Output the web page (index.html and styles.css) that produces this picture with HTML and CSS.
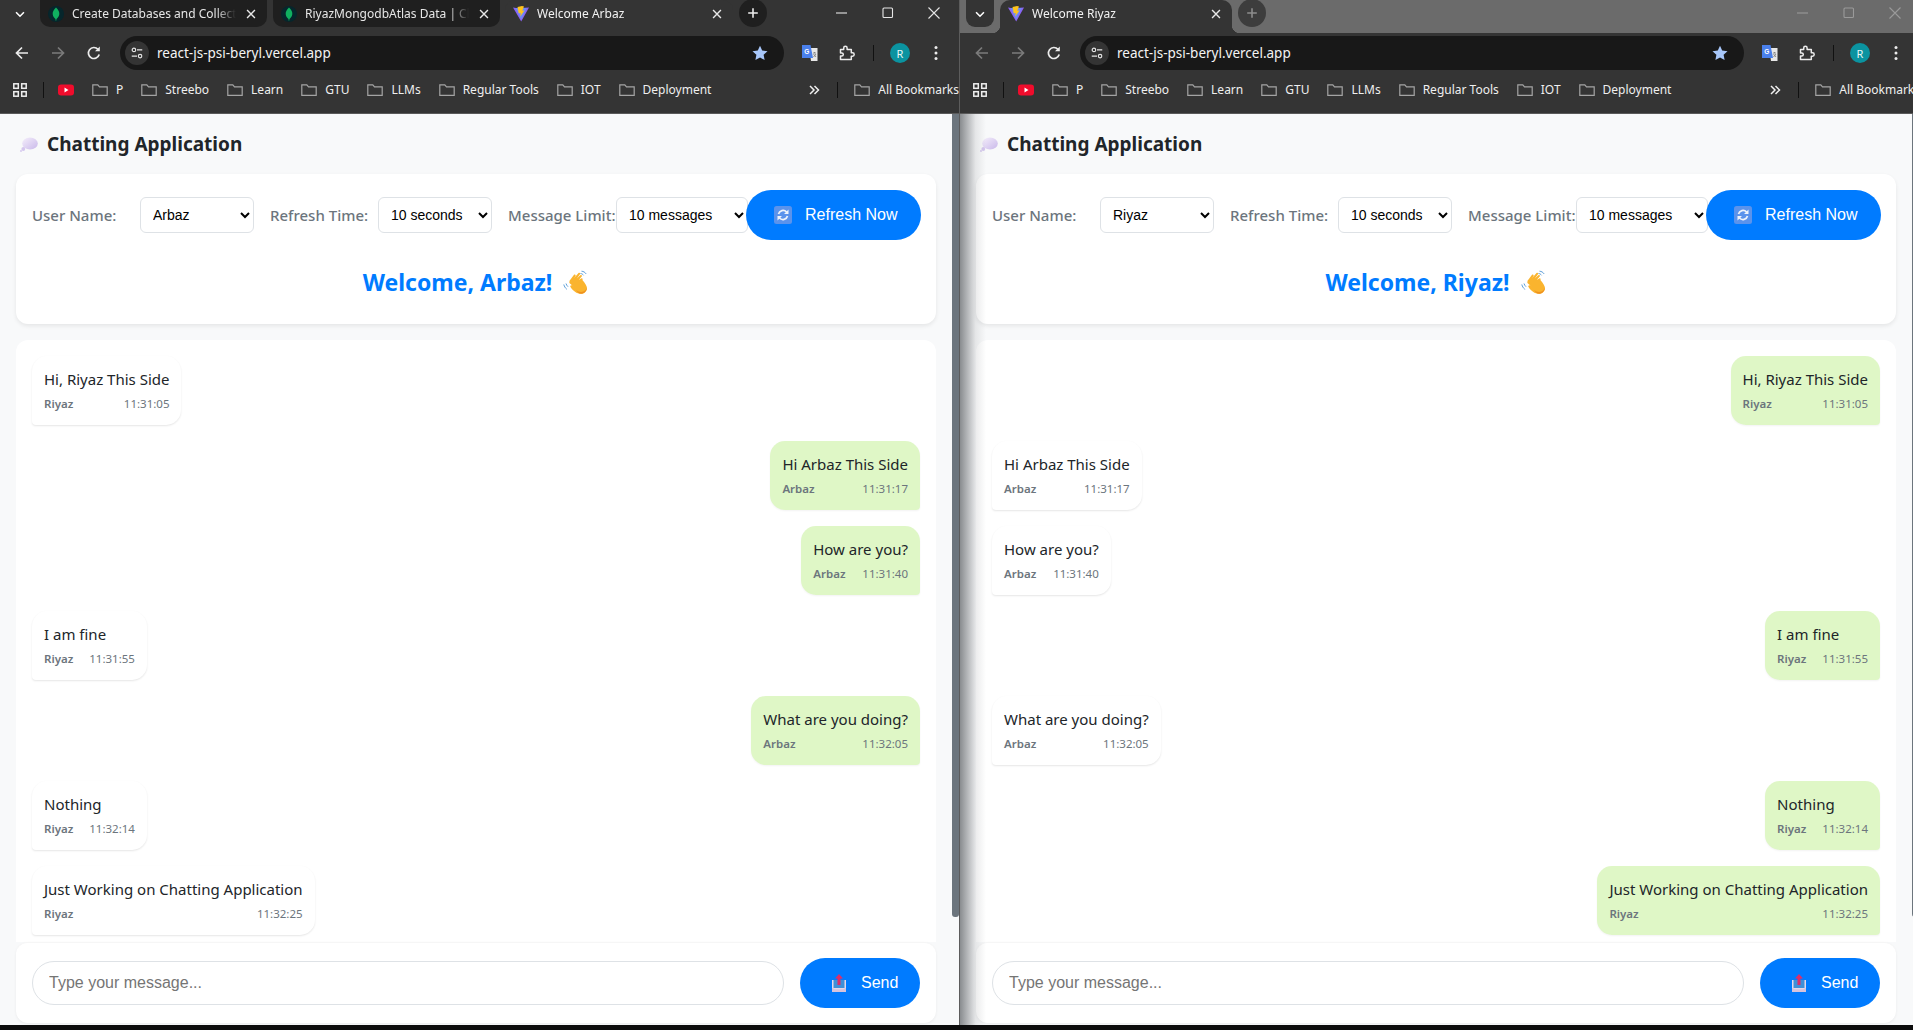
FILE: index.html
```html
<!DOCTYPE html>
<html lang="en">
<head>
  <meta charset="UTF-8" />
  <title>Chatting Application</title>
  <link rel="stylesheet" href="styles.css">
</head>
<body>
  <svg class="sprites" width="0" height="0">
    <symbol id="i-chevron" viewBox="0 0 16 16"><path d="M3.5 6l4.5 4.5L12.500 6" fill="none" stroke="currentColor" stroke-width="1.800"/></symbol>
    <symbol id="i-close" viewBox="0 0 16 16"><path d="M3.500 3.500l9 9M12.500 3.500l-9 9" fill="none" stroke="currentColor" stroke-width="1.600"/></symbol>
    <symbol id="i-plus" viewBox="0 0 16 16"><path d="M8 2.500v11M2.500 8h11" fill="none" stroke="currentColor" stroke-width="1.800"/></symbol>
    <symbol id="i-min" viewBox="0 0 16 16"><path d="M2 8h11" fill="none" stroke="currentColor" stroke-width="1.100"/></symbol>
    <symbol id="i-max" viewBox="0 0 16 16"><rect x="3" y="3" width="9.500" height="9.500" rx="1" fill="none" stroke="currentColor" stroke-width="1.100"/></symbol>
    <symbol id="i-x" viewBox="0 0 16 16"><path d="M2.500 2.500l11 11M13.500 2.500l-11 11" fill="none" stroke="currentColor" stroke-width="1.100"/></symbol>
    <symbol id="i-back" viewBox="0 0 16 16"><path d="M14 8H3M8 2.500L2.500 8 8 13.500" fill="none" stroke="currentColor" stroke-width="1.700"/></symbol>
    <symbol id="i-forward" viewBox="0 0 16 16"><path d="M2 8h11M8 2.500L13.500 8 8 13.500" fill="none" stroke="currentColor" stroke-width="1.700"/></symbol>
    <symbol id="i-reload" viewBox="0 0 16 16"><path d="M13.200 9.500A5.500 5.500 0 1 1 12 4.300" fill="none" stroke="currentColor" stroke-width="1.700"/><path d="M13.800 1.500v4.800H9z" fill="currentColor"/></symbol>
    <symbol id="i-tune" viewBox="0 0 16 16"><g fill="none" stroke="currentColor" stroke-width="1.300"><circle cx="4.500" cy="4.500" r="2"/><path d="M8 4.500h6M2 11.500h6"/><circle cx="11.500" cy="11.500" r="2"/></g></symbol>
    <symbol id="i-star" viewBox="0 0 16 16"><path d="M8 .8l2.200 4.800 5.300.6-3.900 3.600 1 5.200L8 12.400 3.400 15l1-5.200L.5 6.200l5.300-.6z" fill="#a8c7fa"/></symbol>
    <symbol id="i-translate" viewBox="0 0 16 16"><path d="M7 3h8.500v13H9z" fill="#e8e8e8"/><path d="M11 8h3M12.500 7v1M11.500 12l2.500-3M11.500 9l2.500 3" stroke="#777" stroke-width=".8" fill="none"/><path d="M0 0h8.500l2.500 13H0z" fill="#4a80ec"/><text x="4.800" y="8.600" font-size="6.500" font-weight="700" font-family="Liberation Sans, sans-serif" text-anchor="middle" fill="#fff">G</text></symbol>
    <symbol id="i-puzzle" viewBox="0 0 16 16"><path d="M1.500 4.500h3.200V3a1.700 1.700 0 0 1 3.400 0v1.500h4.200v3.300h1.200a1.700 1.700 0 0 1 0 3.400h-1.200v3.300H1.500V11h1.300a1.500 1.500 0 0 0 0-3H1.500z" fill="none" stroke="currentColor" stroke-width="1.500" stroke-linejoin="round"/></symbol>
    <symbol id="i-kebab" viewBox="0 0 16 16"><circle cx="8" cy="2.500" r="1.500" fill="currentColor"/><circle cx="8" cy="8" r="1.500" fill="currentColor"/><circle cx="8" cy="13.500" r="1.500" fill="currentColor"/></symbol>
    <symbol id="i-apps" viewBox="0 0 14 14"><g fill="none" stroke="currentColor" stroke-width="1.500"><rect x=".8" y=".8" width="4.500" height="4.500"/><rect x="8.700" y=".8" width="4.500" height="4.500"/><rect x=".8" y="8.700" width="4.500" height="4.500"/><rect x="8.700" y="8.700" width="4.500" height="4.500"/></g></symbol>
    <symbol id="i-youtube" viewBox="0 0 16 12"><rect width="16" height="11" y=".5" rx="3" fill="#f00c2c"/><path d="M6.500 3.500l4 2.500-4 2.500z" fill="#fff"/></symbol>
    <symbol id="i-folder" viewBox="0 0 16 14"><path d="M.8 12.300V1.800h5l1.700 2h7.700v8.500z" fill="none" stroke="#a4a4a4" stroke-width="1.200"/></symbol>
    <symbol id="i-more" viewBox="0 0 12 12"><path d="M2 2l4 4-4 4M6.500 2l4 4-4 4" fill="none" stroke="currentColor" stroke-width="1.500"/></symbol>
    <symbol id="i-mongo" viewBox="0 0 16 16"><circle cx="8" cy="8" r="8" fill="#06262c"/><path d="M8 1.500c2.600 2.500 3.500 4.500 3.300 6.800C11 10.800 9.300 12 8.500 13l-.3 1.800h-.5L7.500 13c-.9-1-2.600-2.200-2.800-4.700C4.500 6 5.500 4 8 1.500z" fill="#10b060"/></symbol>
    <symbol id="i-vite" viewBox="0 0 16 16"><path d="M0 1.500L6 2.500 8 2 16 1.500 8.200 15.500z" fill="#8a63f5"/><path d="M2.500 2l5.700 11.500L13.800 2z" fill="#5aa8f5" opacity=".6"/><path d="M9 0L4.500 1l1.200 6.300 2-.3-.5 3.500L11.500 4.500l-2.200.2L11 .5z" fill="#fdc31d"/></symbol>
    <symbol id="i-thought" viewBox="0 0 18 15"><defs><linearGradient id="g-thought" x1="0" y1="0" x2="1" y2="1"><stop offset="0" stop-color="#f5effb"/><stop offset="1" stop-color="#c9b8ea"/></linearGradient></defs><ellipse cx="10" cy="6.500" rx="7.800" ry="6" fill="url(#g-thought)"/><circle cx="3.300" cy="12" r="1.900" fill="#d4c6ee"/><circle cx="1" cy="14" r=".9" fill="#d4c6ee"/></symbol>
    <symbol id="i-refresh" viewBox="0 0 18 18"><rect width="18" height="18" rx="2.500" fill="#5b93ec"/><path d="M4.500 8a4.700 4.700 0 0 1 8-2l1 1M13.500 10a4.700 4.700 0 0 1-8 2l-1-1" fill="none" stroke="#eef3fb" stroke-width="1.700"/><path d="M14.500 3.500v4.500H10zM3.500 14.500V10H8z" fill="#eef3fb"/></symbol>
    <symbol id="i-wave" viewBox="0 0 26 24"><g fill="none" stroke="#5c9ed8" stroke-width="1"><path d="M.8 14.500c.5 2 1.500 3.500 3 4.800"/><path d="M3 13.500c.4 1.300 1 2.300 2 3.200"/><path d="M18.500 1.200c2 .2 3.500 1 4.600 2.700"/><path d="M17.500 3.500c1.300.1 2.300.7 3 1.800"/></g><path d="M6 11.500L11 4.800c.9-1 2.200.1 1.500 1.200l-1.300 2 4.300-5c1-1 2.400.2 1.500 1.300l-3.200 4.200 3.500-3.300c1-.9 2.300.4 1.400 1.400l-3 3.500 2.500-1.700c1-.7 2 .5 1.200 1.500C22 13 24 16 24 18c0 3.500-3 5.800-6 5.800-4.500 0-8-3-10.500-6.800-.8-1.300.6-2.500 1.700-1.500l1.500 1.300-4-3.500c-.9-.9 0-2 .8-1.800z" fill="#fab42e"/><path d="M13 20c2 1.800 5 2.500 7.500 1.500 1.800-.8 3-2.200 3.300-4 .3 3.500-2.800 6.300-5.800 6.300-2 0-3.500-1.500-5-3.800z" fill="#ef9220"/></symbol>
    <symbol id="i-outbox" viewBox="0 0 16 18"><path d="M1 6h14v12H1z" fill="#e6d8ea"/><path d="M2.500 6h11v8h-11z" fill="#3f90d8"/><path d="M1 14l3 1.200h8L15 14v4H1z" fill="#d6c3dc"/><path d="M8 0l4 4.500H9.500V11h-3V4.500H4z" fill="#dd2e6a"/></symbol>
  </svg>

  <div class="desktop">
    <section class="window window-active">
      <div class="tabstrip">
        <span class="strip-btn"><svg class="ic12"><use href="#i-chevron"/></svg></span>
        <div class="tab tab-bg">
          <svg class="favicon"><use href="#i-mongo"/></svg>
          <span class="tab-title">Create Databases and Collections</span>
          <svg class="tab-x"><use href="#i-close"/></svg>
        </div>
        <div class="tab tab-bg">
          <svg class="favicon"><use href="#i-mongo"/></svg>
          <span class="tab-title">RiyazMongodbAtlas Data | Cloud</span>
          <svg class="tab-x"><use href="#i-close"/></svg>
        </div>
        <div class="tab tab-current">
          <svg class="favicon"><use href="#i-vite"/></svg>
          <span class="tab-title">Welcome Arbaz</span>
          <svg class="tab-x"><use href="#i-close"/></svg>
        </div>
        <span class="new-tab"><svg class="ic12"><use href="#i-plus"/></svg></span>
        <div class="win-controls">
          <svg class="ic16"><use href="#i-min"/></svg>
          <svg class="ic16"><use href="#i-max"/></svg>
          <svg class="ic16"><use href="#i-x"/></svg>
        </div>
      </div>
      <div class="toolbar">
        <span class="tool"><svg class="ic16"><use href="#i-back"/></svg></span>
        <span class="tool tool-off"><svg class="ic16"><use href="#i-forward"/></svg></span>
        <span class="tool"><svg class="ic16"><use href="#i-reload"/></svg></span>
        <div class="omnibox">
          <span class="site-btn"><svg class="ic14"><use href="#i-tune"/></svg></span>
          <span class="url">react-js-psi-beryl.vercel.app</span>
          <svg class="ic16 star"><use href="#i-star"/></svg>
        </div>
        <span class="tool tool-first"><svg class="ic16"><use href="#i-translate"/></svg></span>
        <span class="tool"><svg class="ic16"><use href="#i-puzzle"/></svg></span>
        <span class="tool-sep"></span>
        <span class="tool"><span class="avatar">R</span></span>
        <span class="tool"><svg class="ic16"><use href="#i-kebab"/></svg></span>
      </div>
      <div class="bookmarks">
        <svg class="ic14"><use href="#i-apps"/></svg>
        <span class="bm-sep"></span>
        <svg class="yt"><use href="#i-youtube"/></svg>
        <span class="bm"><svg class="folder"><use href="#i-folder"/></svg>P</span>
        <span class="bm"><svg class="folder"><use href="#i-folder"/></svg>Streebo</span>
        <span class="bm"><svg class="folder"><use href="#i-folder"/></svg>Learn</span>
        <span class="bm"><svg class="folder"><use href="#i-folder"/></svg>GTU</span>
        <span class="bm"><svg class="folder"><use href="#i-folder"/></svg>LLMs</span>
        <span class="bm"><svg class="folder"><use href="#i-folder"/></svg>Regular Tools</span>
        <span class="bm"><svg class="folder"><use href="#i-folder"/></svg>IOT</span>
        <span class="bm"><svg class="folder"><use href="#i-folder"/></svg>Deployment</span>
        <svg class="more"><use href="#i-more"/></svg>
        <span class="bm-sep"></span>
        <span class="bm bm-all"><svg class="folder"><use href="#i-folder"/></svg>All Bookmarks</span>
      </div>
      <div class="viewport">
        <main class="app">
          <h1 class="app-title"><svg class="thought"><use href="#i-thought"/></svg>Chatting Application</h1>
          <div class="card settings">
            <div class="settings-row">
              <label class="field-label">User Name:</label>
              <select class="field-select"><option>Arbaz</option><option>Riyaz</option></select>
              <label class="field-label">Refresh Time:</label>
              <select class="field-select"><option>10 seconds</option></select>
              <label class="field-label">Message Limit:</label>
              <select class="field-select field-wide"><option>10 messages</option></select>
              <button class="btn btn-refresh"><svg class="btn-icon"><use href="#i-refresh"/></svg>Refresh Now</button>
            </div>
            <h2 class="welcome">Welcome, Arbaz!<svg class="wave"><use href="#i-wave"/></svg></h2>
          </div>
          <div class="card messages">
            <div class="msg msg-in"><p>Hi, Riyaz This Side</p><div class="meta"><b>Riyaz</b><span>11:31:05</span></div></div>
            <div class="msg msg-out"><p>Hi Arbaz This Side</p><div class="meta"><b>Arbaz</b><span>11:31:17</span></div></div>
            <div class="msg msg-out"><p>How are you?</p><div class="meta"><b>Arbaz</b><span>11:31:40</span></div></div>
            <div class="msg msg-in"><p>I am fine</p><div class="meta"><b>Riyaz</b><span>11:31:55</span></div></div>
            <div class="msg msg-out"><p>What are you doing?</p><div class="meta"><b>Arbaz</b><span>11:32:05</span></div></div>
            <div class="msg msg-in"><p>Nothing</p><div class="meta"><b>Riyaz</b><span>11:32:14</span></div></div>
            <div class="msg msg-in"><p>Just Working on Chatting Application</p><div class="meta"><b>Riyaz</b><span>11:32:25</span></div></div>
          </div>
          <div class="card composer">
            <input class="composer-input" type="text" placeholder="Type your message...">
            <button class="btn btn-send"><svg class="btn-icon"><use href="#i-outbox"/></svg>Send</button>
          </div>
        </main>
        <div class="scrollbar"><div class="scroll-thumb"></div></div>
      </div>
    </section>

    <section class="window window-idle">
      <div class="tabstrip">
        <span class="strip-btn"><svg class="ic12"><use href="#i-chevron"/></svg></span>
        <div class="tab tab-current">
          <svg class="favicon"><use href="#i-vite"/></svg>
          <span class="tab-title">Welcome Riyaz</span>
          <svg class="tab-x"><use href="#i-close"/></svg>
        </div>
        <span class="new-tab"><svg class="ic12"><use href="#i-plus"/></svg></span>
        <div class="win-controls">
          <svg class="ic16"><use href="#i-min"/></svg>
          <svg class="ic16"><use href="#i-max"/></svg>
          <svg class="ic16"><use href="#i-x"/></svg>
        </div>
      </div>
      <div class="toolbar">
        <span class="tool tool-off"><svg class="ic16"><use href="#i-back"/></svg></span>
        <span class="tool tool-off"><svg class="ic16"><use href="#i-forward"/></svg></span>
        <span class="tool"><svg class="ic16"><use href="#i-reload"/></svg></span>
        <div class="omnibox">
          <span class="site-btn"><svg class="ic14"><use href="#i-tune"/></svg></span>
          <span class="url">react-js-psi-beryl.vercel.app</span>
          <svg class="ic16 star"><use href="#i-star"/></svg>
        </div>
        <span class="tool tool-first"><svg class="ic16"><use href="#i-translate"/></svg></span>
        <span class="tool"><svg class="ic16"><use href="#i-puzzle"/></svg></span>
        <span class="tool-sep"></span>
        <span class="tool"><span class="avatar">R</span></span>
        <span class="tool"><svg class="ic16"><use href="#i-kebab"/></svg></span>
      </div>
      <div class="bookmarks">
        <svg class="ic14"><use href="#i-apps"/></svg>
        <span class="bm-sep"></span>
        <svg class="yt"><use href="#i-youtube"/></svg>
        <span class="bm"><svg class="folder"><use href="#i-folder"/></svg>P</span>
        <span class="bm"><svg class="folder"><use href="#i-folder"/></svg>Streebo</span>
        <span class="bm"><svg class="folder"><use href="#i-folder"/></svg>Learn</span>
        <span class="bm"><svg class="folder"><use href="#i-folder"/></svg>GTU</span>
        <span class="bm"><svg class="folder"><use href="#i-folder"/></svg>LLMs</span>
        <span class="bm"><svg class="folder"><use href="#i-folder"/></svg>Regular Tools</span>
        <span class="bm"><svg class="folder"><use href="#i-folder"/></svg>IOT</span>
        <span class="bm"><svg class="folder"><use href="#i-folder"/></svg>Deployment</span>
        <svg class="more"><use href="#i-more"/></svg>
        <span class="bm-sep"></span>
        <span class="bm bm-all"><svg class="folder"><use href="#i-folder"/></svg>All Bookmarks</span>
      </div>
      <div class="viewport">
        <main class="app">
          <h1 class="app-title"><svg class="thought"><use href="#i-thought"/></svg>Chatting Application</h1>
          <div class="card settings">
            <div class="settings-row">
              <label class="field-label">User Name:</label>
              <select class="field-select"><option>Riyaz</option><option>Arbaz</option></select>
              <label class="field-label">Refresh Time:</label>
              <select class="field-select"><option>10 seconds</option></select>
              <label class="field-label">Message Limit:</label>
              <select class="field-select field-wide"><option>10 messages</option></select>
              <button class="btn btn-refresh"><svg class="btn-icon"><use href="#i-refresh"/></svg>Refresh Now</button>
            </div>
            <h2 class="welcome">Welcome, Riyaz!<svg class="wave"><use href="#i-wave"/></svg></h2>
          </div>
          <div class="card messages">
            <div class="msg msg-out"><p>Hi, Riyaz This Side</p><div class="meta"><b>Riyaz</b><span>11:31:05</span></div></div>
            <div class="msg msg-in"><p>Hi Arbaz This Side</p><div class="meta"><b>Arbaz</b><span>11:31:17</span></div></div>
            <div class="msg msg-in"><p>How are you?</p><div class="meta"><b>Arbaz</b><span>11:31:40</span></div></div>
            <div class="msg msg-out"><p>I am fine</p><div class="meta"><b>Riyaz</b><span>11:31:55</span></div></div>
            <div class="msg msg-in"><p>What are you doing?</p><div class="meta"><b>Arbaz</b><span>11:32:05</span></div></div>
            <div class="msg msg-out"><p>Nothing</p><div class="meta"><b>Riyaz</b><span>11:32:14</span></div></div>
            <div class="msg msg-out"><p>Just Working on Chatting Application</p><div class="meta"><b>Riyaz</b><span>11:32:25</span></div></div>
          </div>
          <div class="card composer">
            <input class="composer-input" type="text" placeholder="Type your message...">
            <button class="btn btn-send"><svg class="btn-icon"><use href="#i-outbox"/></svg>Send</button>
          </div>
        </main>
        <div class="scrollbar"><div class="scroll-thumb"></div></div>
      </div>
    </section>
  </div>
  <div class="taskbar"></div>
</body>
</html>
```

FILE: styles.css
```css
:root {
  --ui-font: "Noto Sans", "Open Sans", sans-serif;
  --frame: #343434;
  --tab-bg: #1f1f1f;
  --blue: #007bff;
  --muted: #6c757d;
  --line: #dee2e6;
}

* {
  box-sizing: border-box;
}

body {
  margin: 0;
  height: 1030px;
  overflow: hidden;
  background: #000;
  font-family: var(--ui-font);
}

.sprites {
  position: absolute;
}

.desktop {
  display: flex;
  width: 1913px;
  height: 1025px;
  overflow: hidden;
}

.taskbar {
  height: 5px;
  background: #0c0c0c;
}

.window {
  flex: none;
  display: flex;
  flex-direction: column;
  width: 960px;
  height: 1025px;
  background: var(--frame);
  color: #e3e3e3;
}

.window-active {
  border-right: 1px solid #5c5c5c;
}

/* tab strip */
.tabstrip {
  display: flex;
  align-items: flex-start;
  height: 33px;
  padding-left: 6px;
}

.window-idle .tabstrip {
  background: #6b6b6b;
}

.strip-btn {
  display: flex;
  align-items: center;
  justify-content: center;
  width: 28px;
  height: 27px;
  border-radius: 0 0 9px 9px;
  color: #fff;
}

.window-idle .strip-btn {
  background: var(--frame);
}

.ic12 {
  width: 14px;
  height: 14px;
}

.ic14 {
  width: 14px;
  height: 14px;
}

.ic16 {
  width: 16px;
  height: 16px;
}

.tab {
  position: relative;
  display: flex;
  align-items: center;
  height: 27px;
  padding-left: 8px;
  font-size: 12px;
  color: #e6e6e6;
}

.tab-bg {
  width: 227px;
  margin-left: 6px;
  border-radius: 0 0 10px 10px;
  background: var(--tab-bg);
}

.tab-bg + .tab-current {
  width: 228px;
  margin-left: 5px;
}

.tab-current {
  width: 232px;
  height: 33px;
  margin-left: 6px;
  padding-bottom: 6px;
  border-radius: 10px 10px 0 0;
  background: var(--frame);
  color: #f2f2f2;
}

.window-idle .tab-current::before,
.window-idle .tab-current::after {
  content: "";
  position: absolute;
  bottom: 0;
  width: 8px;
  height: 8px;
}

.window-idle .tab-current::before {
  left: -8px;
  background: radial-gradient(circle at 0 0, #6b6b6b 8px, var(--frame) 8.500px);
}

.window-idle .tab-current::after {
  right: -8px;
  background: radial-gradient(circle at 100% 0, #6b6b6b 8px, var(--frame) 8.500px);
}

.favicon {
  flex: none;
  width: 16px;
  height: 16px;
  margin-right: 8px;
}

.tab-title {
  flex: 1;
  overflow: hidden;
  white-space: nowrap;
  -webkit-mask-image: linear-gradient(to right, #000 88%, transparent);
  mask-image: linear-gradient(to right, #000 88%, transparent);
}

.tab-x {
  flex: none;
  width: 14px;
  height: 14px;
  margin: 0 9px 0 8px;
  color: #e8e8e8;
}

.new-tab {
  display: flex;
  align-items: center;
  justify-content: center;
  flex: none;
  width: 28px;
  height: 28px;
  margin: -1px 0 0 6px;
  border-radius: 50%;
  background: var(--tab-bg);
  color: #eee;
}

.tab-current + .new-tab {
  margin-left: 6px;
}

.window-idle .new-tab {
  background: #3d3d3d;
  color: #8d8d8d;
  margin-left: 6px;
}

.win-controls {
  display: flex;
  gap: 30px;
  margin-left: auto;
  margin-right: 17px;
  padding-top: 5px;
  color: #e6e6e6;
}

.window-idle .win-controls {
  color: #9a9a9a;
}

/* toolbar */
.toolbar {
  display: flex;
  align-items: center;
  height: 40px;
  padding: 0 0 0 4px;
  margin-bottom: 0;
}

.tool {
  display: flex;
  align-items: center;
  justify-content: center;
  flex: none;
  width: 36px;
  height: 34px;
  color: #ececec;
}

.tool-off {
  color: #7b7b7b;
}

.tool-first {
  margin-left: 8px;
  margin-right: 1px;
}

.omnibox {
  flex: none;
  display: flex;
  align-items: center;
  width: 664px;
  height: 34px;
  margin-left: 8px;
  padding: 0 16px 0 5px;
  border-radius: 17px;
  background: #181818;
}

.site-btn {
  display: flex;
  align-items: center;
  justify-content: center;
  width: 24px;
  height: 24px;
  border-radius: 50%;
  background: #343434;
  color: #e6e6e6;
}

.url {
  flex: 1;
  margin-left: 8px;
  font-size: 13.500px;
  color: #f4f4f4;
}

.tool-sep {
  flex: none;
  width: 1px;
  height: 16px;
  margin: 0 8px;
  background: #111;
}

.avatar {
  display: flex;
  align-items: center;
  justify-content: center;
  width: 20px;
  height: 20px;
  border-radius: 50%;
  background: #0b93a0;
  font-size: 11px;
  color: #e8f7f8;
}

/* bookmarks bar */
.bookmarks {
  display: flex;
  align-items: center;
  height: 41px;
  padding: 0 0 7px 13px;
  border-bottom: 1px solid #5a5a5a;
  font-size: 12px;
  color: #efefef;
}

.bookmarks > .ic14 {
  color: #efefef;
}

.bm-sep {
  flex: none;
  width: 1px;
  height: 16px;
  margin: 0 14px 0 16px;
  background: #111;
}

.yt {
  flex: none;
  width: 16px;
  height: 12px;
  margin-right: 18px;
}

.bm {
  display: flex;
  align-items: center;
  gap: 8px;
  margin-right: 18px;
  white-space: nowrap;
}

.bm-all {
  margin-right: 0;
}

.folder {
  width: 16px;
  height: 14px;
}

.more {
  width: 12px;
  height: 12px;
  margin-left: auto;
}

.more + .bm-sep {
  margin: 0 16px 0 17px;
}

/* page */
.viewport {
  flex: 1;
  display: flex;
  min-height: 0;
  background: #f8f9fa;
}

.window-idle .viewport {
  position: relative;
}

.window-idle .viewport::before {
  content: "";
  position: absolute;
  top: 0;
  bottom: 0;
  left: 0;
  width: 26px;
  background: linear-gradient(to right, rgba(90, 94, 98, .7), rgba(90, 94, 98, .12) 60%, transparent);
}

.app {
  flex: none;
  width: 952px;
  padding: 0 16px;
  overflow: hidden;
  color: #212529;
}

.window-active .app {
  width: 952px;
}

.app-title {
  display: flex;
  align-items: center;
  height: 60px;
  margin: 0;
  padding-left: 4px;
  font-size: 19px;
  font-weight: 700;
}

.thought {
  width: 18px;
  height: 15px;
  margin-right: 9px;
}

.card {
  background: #fff;
  border-radius: 12px;
  box-shadow: 0 2px 4px rgba(0, 0, 0, .08);
}

.settings {
  height: 150px;
  padding: 16px;
}

.settings-row {
  display: flex;
  align-items: center;
  height: 50px;
}

.field-label {
  flex: none;
  width: 108px;
  font-size: 15px;
  font-weight: 500;
  color: var(--muted);
}

.field-select {
  flex: none;
  width: 114px;
  height: 36px;
  margin-right: 16px;
  padding: 0 8px;
  border: 1px solid var(--line);
  border-radius: 6px;
  background: #fff;
  font: 14px "Liberation Sans", Arial, sans-serif;
  color: #000;
}

.field-wide {
  width: 132px;
  margin-right: -2px;
}

.btn {
  position: relative;
  display: flex;
  align-items: center;
  flex: none;
  height: 50px;
  border: none;
  border-radius: 25px;
  background: var(--blue);
  font: 16px "Liberation Sans", Arial, sans-serif;
  color: #fff;
}

.btn-refresh {
  width: 175px;
  padding-left: 28px;
}

.btn-send {
  width: 120px;
  padding-left: 30px;
}

.btn-icon {
  width: 18px;
  height: 18px;
  margin-right: 13px;
}

.welcome {
  display: flex;
  align-items: center;
  justify-content: center;
  height: 52px;
  margin: 16px 0 0;
  font-size: 23px;
  font-weight: 700;
  color: var(--blue);
}

.wave {
  width: 26px;
  height: 24px;
  margin-left: 11px;
}

.messages {
  display: flex;
  flex-direction: column;
  align-items: flex-start;
  gap: 16px;
  height: 602px;
  margin-top: 16px;
  padding: 16px;
  border-radius: 12px 12px 0 0;
  box-shadow: none;
}

.msg {
  flex: none;
  height: 69px;
  padding: 9px 12px 0;
  border-radius: 15px 15px 15px 4px;
  background: #fff;
  box-shadow: 0 1px 2px rgba(0, 0, 0, .1);
}

.msg-out {
  align-self: flex-end;
  border-radius: 15px 15px 4px 15px;
  background: #dff7c6;
  box-shadow: 0 1px 2px rgba(0, 0, 0, .05);
}

.msg p {
  margin: 0;
  height: 28px;
  font-size: 15px;
  line-height: 28px;
}

.meta {
  display: flex;
  justify-content: space-between;
  gap: 16px;
  margin-top: 1px;
  font-size: 11.500px;
  line-height: 20px;
  color: var(--muted);
}

.meta b {
  font-weight: 600;
}

.composer {
  display: flex;
  align-items: center;
  gap: 16px;
  height: 81px;
  padding: 0 16px;
  border-top: 1px solid #f6f6f6;
  box-shadow: 0 1px 3px rgba(0, 0, 0, .06);
}

.composer-input {
  flex: 1;
  min-width: 0;
  height: 44px;
  padding: 0 16px;
  border: 1px solid var(--line);
  border-radius: 22px;
  font: 16px "Liberation Sans", Arial, sans-serif;
  outline: none;
}

.composer-input::placeholder {
  color: #757575;
}

.scrollbar {
  flex: none;
  width: 7px;
}

.scroll-thumb {
  height: 803px;
  border-radius: 0 0 3px 3px;
  background: #6c757d;
}
```
